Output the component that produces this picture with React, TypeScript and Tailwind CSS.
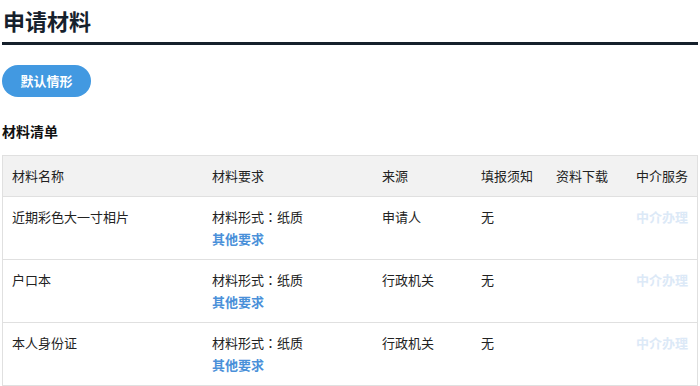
const columns = ['材料名称', '材料要求', '来源', '填报须知', '资料下载', '中介服务']

const rows = [
  { name: '近期彩色大一寸相片', source: '申请人', notice: '无' },
  { name: '户口本', source: '行政机关', notice: '无' },
  { name: '本人身份证', source: '行政机关', notice: '无' },
]

const grid = 'grid grid-cols-[200px_170px_99px_75px_80px_1fr]'

export default function App() {
  return (
    <div className="min-h-[386px] bg-white px-[2px] text-[#222] [font-family:'Noto_Sans_CJK_SC','Liberation_Sans',sans-serif]">
      <div className="border-b-[3px] border-[#15202b] pt-[5px] pb-[7px]">
        <h1 className="pl-[1px] text-[22px] leading-[30px] font-bold text-[#16212c]">申请材料</h1>
      </div>

      <button className="mt-[20px] h-[32px] w-[89px] rounded-full bg-[#4299e1] text-[13px] font-bold text-white">
        默认情形
      </button>

      <h2 className="mt-[24px] text-[14px] leading-[20px] font-bold text-[#111]">材料清单</h2>

      <div className="mt-[14px] border-x border-t border-[#e0e0e0] text-[13px] leading-[22px]">
        <div className={`${grid} h-[41px] items-center border-b border-[#e0e0e0] bg-[#f2f2f2]`}>
          {columns.map((c) => (
            <div key={c} className="px-[9px]">{c}</div>
          ))}
        </div>
        {rows.map((r) => (
          <div key={r.name} className={`${grid} h-[63px] border-b border-[#e0e0e0] pt-[9px]`}>
            <div className="px-[9px]">{r.name}</div>
            <div className="px-[9px]">
              <div>
                材料形式<span className="[font-family:'Noto_Sans_CJK_TC',sans-serif]">：</span>纸质
              </div>
              <div className="font-bold text-[#4a90d9]">其他要求</div>
            </div>
            <div className="px-[9px]">{r.source}</div>
            <div className="px-[9px]">{r.notice}</div>
            <div className="px-[9px]"></div>
            <div className="px-[9px] font-bold text-[#dce9f7]">中介办理</div>
          </div>
        ))}
      </div>
    </div>
  )
}
